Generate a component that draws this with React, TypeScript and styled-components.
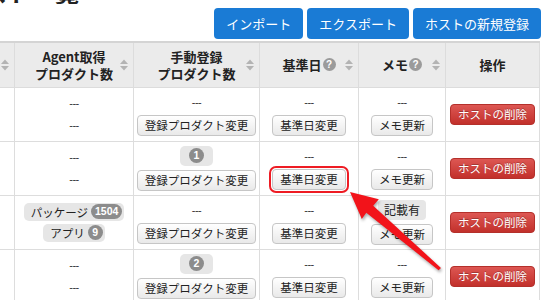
import React from 'react';
import styled, { createGlobalStyle, css } from 'styled-components';

const GlobalStyle = createGlobalStyle`
  html, body { margin: 0; padding: 0; background: #fff; }
  body {
    font-family: "Noto Sans CJK JP", "Noto Sans", sans-serif;
    color: #222;
  }
  * { box-sizing: border-box; }
`;

const Page = styled.div`
  position: relative;
  width: 550px;
  height: 300px;
  overflow: hidden;
  background: #fff;
`;

const TitleClip = styled.div`
  height: 4px;
  display: flex;
  align-items: flex-end;
  overflow: hidden;
`;

const Title = styled.h1`
  margin: 0 0 0 -41px;
  flex-shrink: 0;
  font-size: 24px;
  line-height: 1;
  font-weight: 700;
  white-space: nowrap;
  color: #222;
`;

const Toolbar = styled.div`
  display: flex;
  justify-content: flex-end;
  gap: 4px;
  margin-top: 4px;
  padding-right: 9px;
`;

const PrimaryButton = styled.button`
  height: 31px;
  padding: 0 12px;
  border: none;
  border-radius: 4px;
  background: #1a7bd5;
  color: #fff;
  font-family: inherit;
  font-size: 13px;
  line-height: 31px;
  white-space: nowrap;
`;

const TableWrap = styled.div`
  margin-top: 2px;
  margin-left: -66px;
`;

const Table = styled.table`
  border-collapse: collapse;
  table-layout: fixed;
  width: 605px;
`;

const Th = styled.th`
  position: relative;
  height: 45px;
  padding: 0 14px;
  background: #ebebeb;
  border: 1px solid #dcdcdc;
  border-top: 2px solid #d4d4d4;
  font-size: 13px;
  font-weight: 700;
  line-height: 17px;
  text-align: center;
  vertical-align: middle;
  color: #222;
`;

const HeadLine = styled.div`
  white-space: nowrap;
`;

const HeadLabel = styled.span`
  display: inline-flex;
  align-items: center;
  gap: 1px;
  white-space: nowrap;
`;

const HelpIcon = styled.span`
  display: inline-flex;
  align-items: center;
  justify-content: center;
  width: 13px;
  height: 13px;
  border-radius: 50%;
  background: #9b9b9b;
  color: #fff;
  font-family: "Liberation Sans", Arial, sans-serif;
  font-size: 10px;
  font-weight: 700;
  line-height: 1;
`;

const SortMark = styled.svg`
  position: absolute;
  right: 5px;
  top: 50%;
  transform: translateY(-50%);
`;

const Td = styled.td`
  height: 54px;
  padding: 3px 3px;
  border: 1px solid #dddddd;
  text-align: center;
  vertical-align: middle;
  font-size: 11.5px;
  color: #222;
`;

const Stack = styled.div<{ $gap?: number }>`
  display: flex;
  flex-direction: column;
  align-items: center;
  gap: ${(p) => p.$gap ?? 4}px;
`;

const Dash = styled.div`
  line-height: 18px;
  font-size: 11px;
  color: #333;
  font-family: "Liberation Sans", Arial, sans-serif;
  letter-spacing: -0.5px;
`;

const GrayButton = styled.button<{ $highlighted?: boolean }>`
  height: 21px;
  padding: 0 7px;
  border: 1px solid #c6c6c6;
  border-radius: 4px;
  background: linear-gradient(#ffffff, #e9e9e9);
  color: #222;
  font-family: inherit;
  font-size: 11.5px;
  line-height: 19px;
  white-space: nowrap;
  ${(p) =>
    p.$highlighted &&
    css`
      outline: 2.5px solid #ee1c24;
      outline-offset: 1.5px;
    `}
`;

const DangerButton = styled.button`
  height: 21px;
  padding: 0 7px;
  border: 1px solid #b4302b;
  border-radius: 4px;
  background: linear-gradient(#dd5753, #c2302b);
  color: #fff;
  font-family: inherit;
  font-size: 11.5px;
  line-height: 19px;
  white-space: nowrap;
  text-shadow: 0 -1px 0 rgba(0, 0, 0, 0.25);
`;

const CountBox = styled.span<{ $height?: number }>`
  display: inline-flex;
  align-items: center;
  gap: 3px;
  height: ${(p) => p.$height ?? 20}px;
  padding: 0 2px 0 7px;
  border-radius: 5px;
  background: #e6e6e6;
  font-size: 11.5px;
  color: #222;
  white-space: nowrap;
`;

const LoneCount = styled(CountBox)`
  padding: 0 9px;
`;

const CountPill = styled.span`
  display: inline-flex;
  align-items: center;
  justify-content: center;
  min-width: 15px;
  height: 15px;
  padding: 0 4px;
  border-radius: 8px;
  background: #8c8c8c;
  color: #fff;
  font-family: "Liberation Sans", Arial, sans-serif;
  font-size: 10.5px;
  font-weight: 700;
  line-height: 1;
`;

const NoteBadge = styled.span`
  display: inline-flex;
  align-items: center;
  height: 20px;
  padding: 0 6px;
  border-radius: 4px;
  background: #e6e6e6;
  font-size: 12px;
  color: #222;
`;

const ArrowOverlay = styled.svg`
  position: absolute;
  left: 0;
  top: 0;
  pointer-events: none;
  filter: drop-shadow(1px 2px 1.5px rgba(0, 0, 0, 0.35));
`;

const Sort = () => (
  <SortMark width="8" height="12" viewBox="0 0 8 12">
    <polygon points="0,5 4,0.5 8,5" fill="#b3b3b3" />
    <polygon points="0,7 4,11.5 8,7" fill="#b3b3b3" />
  </SortMark>
);

const Help = () => <HelpIcon>?</HelpIcon>;

type Row = {
  agent: React.ReactNode;
  manual: React.ReactNode;
  memoTop: React.ReactNode;
  highlight?: boolean;
};

const dashes = (
  <Stack>
    <Dash>---</Dash>
    <Dash>---</Dash>
  </Stack>
);

const rows: Row[] = [
  { agent: dashes, manual: <Dash>---</Dash>, memoTop: <Dash>---</Dash> },
  {
    agent: dashes,
    manual: (
      <LoneCount>
        <CountPill>1</CountPill>
      </LoneCount>
    ),
    memoTop: <Dash>---</Dash>,
    highlight: true,
  },
  {
    agent: (
      <Stack $gap={3}>
        <CountBox $height={18}>
          パッケージ<CountPill>1504</CountPill>
        </CountBox>
        <CountBox $height={18}>
          アプリ<CountPill>9</CountPill>
        </CountBox>
      </Stack>
    ),
    manual: <Dash>---</Dash>,
    memoTop: <NoteBadge>記載有</NoteBadge>,
  },
  {
    agent: dashes,
    manual: (
      <LoneCount>
        <CountPill>2</CountPill>
      </LoneCount>
    ),
    memoTop: <Dash>---</Dash>,
  },
];

export default function App() {
  return (
    <Page>
      <GlobalStyle />
      <TitleClip>
        <Title>ホスト一覧</Title>
      </TitleClip>
      <Toolbar>
        <PrimaryButton>インポート</PrimaryButton>
        <PrimaryButton>エクスポート</PrimaryButton>
        <PrimaryButton>ホストの新規登録</PrimaryButton>
      </Toolbar>
      <TableWrap>
        <Table>
          <colgroup>
            <col style={{ width: 80 }} />
            <col style={{ width: 119 }} />
            <col style={{ width: 126 }} />
            <col style={{ width: 99 }} />
            <col style={{ width: 87 }} />
            <col style={{ width: 94 }} />
          </colgroup>
          <thead>
            <tr>
              <Th>
                <Sort />
              </Th>
              <Th>
                <HeadLine>Agent取得</HeadLine>
                <HeadLine>プロダクト数</HeadLine>
                <Sort />
              </Th>
              <Th>
                <HeadLine>手動登録</HeadLine>
                <HeadLine>プロダクト数</HeadLine>
                <Sort />
              </Th>
              <Th>
                <HeadLabel>
                  基準日
                  <Help />
                </HeadLabel>
                <Sort />
              </Th>
              <Th>
                <HeadLabel>
                  メモ
                  <Help />
                </HeadLabel>
                <Sort />
              </Th>
              <Th>操作</Th>
            </tr>
          </thead>
          <tbody>
            {rows.map((r, i) => (
              <tr key={i}>
                <Td />
                <Td>{r.agent}</Td>
                <Td>
                  <Stack>
                    {r.manual}
                    <GrayButton>登録プロダクト変更</GrayButton>
                  </Stack>
                </Td>
                <Td>
                  <Stack>
                    <Dash>---</Dash>
                    <GrayButton $highlighted={r.highlight}>基準日変更</GrayButton>
                  </Stack>
                </Td>
                <Td>
                  <Stack>
                    {r.memoTop}
                    <GrayButton>メモ更新</GrayButton>
                  </Stack>
                </Td>
                <Td>
                  <DangerButton>ホストの削除</DangerButton>
                </Td>
              </tr>
            ))}
          </tbody>
        </Table>
      </TableWrap>
      <ArrowOverlay width="550" height="300" viewBox="0 0 550 300">
        <polygon
          points="350,192 378.8,199.3 373.2,205.8 441,267.9 438.6,270.2 366.3,212.8 361.8,219.1"
          fill="#f2131a"
        />
      </ArrowOverlay>
    </Page>
  );
}
